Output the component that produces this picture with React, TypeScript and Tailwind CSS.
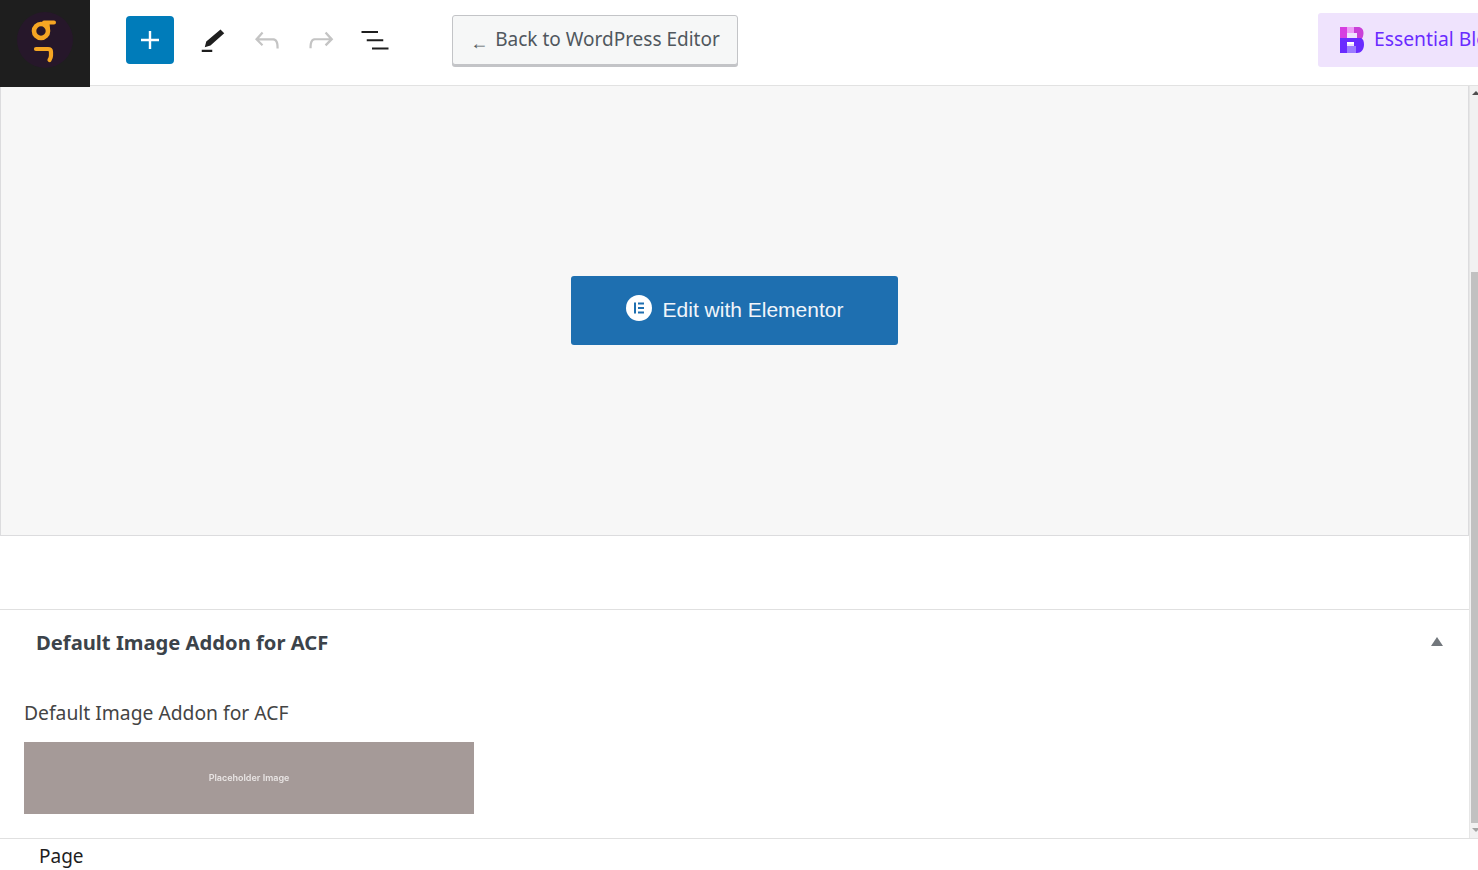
const uiFont = { fontFamily: '"Noto Sans", "Open Sans", sans-serif' };

const Icon = ({ d, className = '' }: { d: string; className?: string }) => (
  <svg viewBox="0 0 24 24" width="36" height="36" fill="currentColor" className={className}>
    <path d={d} />
  </svg>
);

const LogoMark = () => (
  <svg width="56" height="56" viewBox="0 0 56 56" fill="none">
    <circle cx="28" cy="28" r="28" fill="#26172a" />
    <circle cx="24" cy="19" r="7" stroke="#f5a623" strokeWidth="4.600" />
    <path d="M27 10.500h10M30.500 12c.5 2 .5 4 .5 7" stroke="#f5a623" strokeWidth="4" strokeLinecap="round" />
    <path d="M19 37h12c2 0 3 1 3 3v3.500c0 1.500-.5 3-1.500 4.500" stroke="#f5a623" strokeWidth="4.200" strokeLinecap="round" />
  </svg>
);

const BlocksLogo = () => (
  <svg width="24" height="26" viewBox="0 0 24 26" className="shrink-0">
    <path d="M0 0h7v13H0z" fill="#d63ee0" />
    <path d="M7 0h10v6H7z" fill="#ee9cf7" />
    <path d="M17 0h1c3.500 0 5.500 2.500 5.500 6 0 3-1 5-2.500 7h-4V6h-3V0z" fill="#c93fd8" />
    <path d="M0 11h14v4H7v11H0z" fill="#6a2bff" />
    <path d="M14 11h7c2 1 3 3 3 6.500 0 5-3 8.500-7 8.500h-1v-7h-2v-8z" fill="#6a2bff" />
    <path d="M7 19h9v7H7z" fill="#9b7bff" />
    <path d="M7 15h7v2H7z" fill="#ffffff" />
  </svg>
);

const ElementorMark = () => (
  <svg width="26" height="26" viewBox="0 0 26 26" className="mb-[3px] shrink-0">
    <circle cx="13" cy="13" r="13" fill="#ffffff" />
    <path d="M8 7.500h2v11H8zM12 7.500h6v2h-6zM12 12h6v2h-6zM12 16.500h6v2h-6z" fill="#1e6fb0" />
  </svg>
);

const Toolbar = () => (
  <header className="relative z-10 flex h-[86px] shrink-0 items-start border-b border-[#e2e2e2] bg-white">
    <div className="flex h-[87px] w-[90px] shrink-0 items-center justify-center bg-[#1e1e1e] pb-[7px]">
      <LogoMark />
    </div>
    <button className="ml-9 mt-4 flex h-12 w-12 shrink-0 items-center justify-center rounded-sm bg-[#007cba] text-white">
      <Icon d="M18 11.200h-5.200V6h-1.600v5.200H6v1.600h5.200V18h1.600v-5.200H18z" />
    </button>
    <div className="ml-[21px] mt-[22px] flex items-center gap-[18px]">
      <Icon className="text-[#1e1e1e]" d="M19.500 7.500L17 5 7.500 13l-1 3.800 3.800-1.200L19.500 7.500zM4.500 20h7v-1.500h-7V20z" />
      <Icon className="text-[#c4c4c4]" d="M18.300 11.700c-.6-.6-1.400-.9-2.300-.9H6.700l2.900-3.300-1.100-1-4.500 5L8.500 16l1-1-2.700-2.700H16c.5 0 .9.2 1.300.5 1 1 1 3.400 1 4.500v.3h1.500v-.2c0-1.500 0-4.300-1.500-5.700z" />
      <Icon className="text-[#c4c4c4]" d="M15.600 6.500l-1.100 1 2.900 3.300H8c-.9 0-1.700.3-2.300.9-1.400 1.500-1.400 4.200-1.400 5.600v.2h1.500v-.3c0-1.100 0-3.500 1-4.500.3-.3.7-.5 1.300-.5h9.200L14.500 15l1.100 1.100 4.600-4.600-4.600-5z" />
      <Icon className="text-[#1e1e1e]" d="M3 6h11v1.300H3V6zm3.500 5.500h11v1.300h-11v-1.300zM21 17H10v1.300h11V17z" />
    </div>
    <button
      style={uiFont}
      className="ml-[59px] mt-[15px] flex h-[50px] w-[286px] shrink-0 items-center justify-center gap-[7px] rounded-[3px] border border-[#c3c4c7] bg-[#f6f7f7] pb-[1px] text-[19px] text-[#50575e] shadow-[0_2px_0_#c3c4c7]"
    >
      <span className="mt-[5px] text-[18px] leading-none">←</span>
      <span>Back to WordPress Editor</span>
    </button>
    <div
      style={uiFont}
      className="ml-auto mt-[13px] flex h-[54px] w-[160px] shrink-0 items-center gap-[10px] whitespace-nowrap rounded-l-[3px] bg-[#efe3fd] pl-[22px] text-[19.300px] text-[#6a2bff]"
    >
      <BlocksLogo />
      <span className="mb-[2px]">Essential Blocks</span>
    </div>
  </header>
);

const Scrollbar = () => (
  <div className="flex w-[9px] shrink-0 flex-col border-l border-[#e6e6e6] bg-[#f1f1f1]">
    <div className="flex h-[186px] justify-center pt-[5px]">
      <div className="ml-[3px] h-0 w-0 border-x-[4px] border-b-[4px] border-x-transparent border-b-[#505050]" />
    </div>
    <div className="ml-[1px] h-[551px] bg-[#c1c1c1]" />
    <div className="flex flex-1 justify-center pt-[5px]">
      <div className="ml-[3px] h-0 w-0 border-x-[4px] border-t-[4px] border-x-transparent border-t-[#a3a3a3]" />
    </div>
  </div>
);

const App = () => (
  <div className="flex h-[870px] w-[1478px] flex-col overflow-hidden bg-white">
    <Toolbar />
    <div className="flex h-[752px] shrink-0">
      <main className="min-w-0 flex-1">
        <div className="flex h-[450px] items-center justify-center border-x border-b border-[#dcdcde] bg-[#f7f7f7]">
          <button
            style={{ fontFamily: '"Liberation Sans", Arial, sans-serif' }}
            className="flex h-[69px] w-[327px] items-center justify-center gap-[11px] rounded-[3px] bg-[#1e6fb0] pb-[2px] text-[21px] text-[#f1f5fa]"
          >
            <ElementorMark />
            <span>Edit with Elementor</span>
          </button>
        </div>
        <section style={uiFont} className="mt-[73px] border-t border-[#e0e0e0]">
          <div className="flex h-[66px] items-center justify-between pl-9 pr-[26px]">
            <h2 className="mb-[2px] text-[20.200px] font-bold text-[#3c434a]">Default Image Addon for ACF</h2>
            <div className="mb-[3px] h-0 w-0 border-x-[6.500px] border-b-[9px] border-x-transparent border-b-[#72777c]" />
          </div>
          <div className="pl-6 pt-[22px]">
            <p className="text-[19.300px] leading-[30px] text-[#444444]">Default Image Addon for ACF</p>
            <div className="mt-[14px] flex h-[72px] w-[450px] items-center justify-center bg-[#a59a98]">
              <span
                style={{ fontFamily: 'Inter, sans-serif' }}
                className="text-[9px] font-semibold text-[#e8e4e3] blur-[0.6px]"
              >
                Placeholder Image
              </span>
            </div>
          </div>
        </section>
      </main>
      <Scrollbar />
    </div>
    <footer style={uiFont} className="flex flex-1 items-center border-t border-[#e0e0e0] bg-white pl-[39px] pt-[3px]">
      <span className="text-[19px] text-[#1e1e1e]">Page</span>
    </footer>
  </div>
);

export default App;
